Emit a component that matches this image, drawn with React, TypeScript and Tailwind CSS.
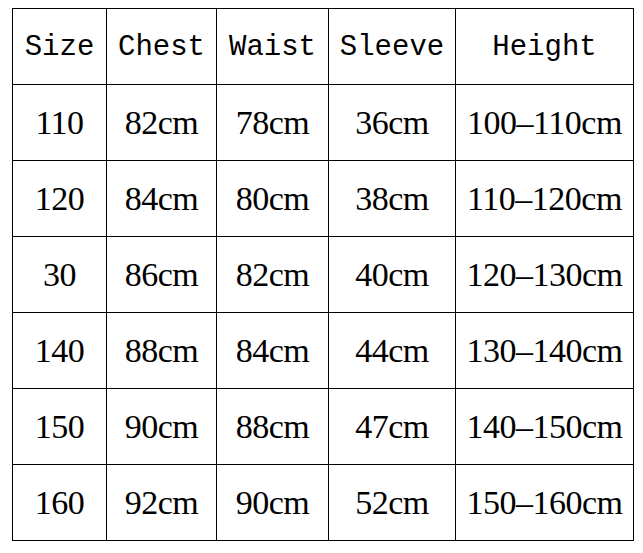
import React from 'react';

const header = ['Size', 'Chest', 'Waist', 'Sleeve', 'Height'];

const rows = [
  ['110', '82cm', '78cm', '36cm', '100–110cm'],
  ['120', '84cm', '80cm', '38cm', '110–120cm'],
  ['30', '86cm', '82cm', '40cm', '120–130cm'],
  ['140', '88cm', '84cm', '44cm', '130–140cm'],
  ['150', '90cm', '88cm', '47cm', '140–150cm'],
  ['160', '92cm', '90cm', '52cm', '150–160cm'],
];

export default function App() {
  return (
    <div className="w-[643px] h-[553px] bg-white pt-[8px] pl-[12px]">
      <div className="inline-grid grid-cols-[93px_109px_111px_126px_177px] auto-rows-[75px] gap-px p-px bg-black">
        {header.map(h => (
          <div
            key={h}
            className="bg-white flex items-center justify-center text-[29px] text-black pt-[2px]"
            style={{ fontFamily: '"Liberation Mono", "DejaVu Sans Mono", monospace' }}
          >
            {h}
          </div>
        ))}
        {rows.map(r =>
          r.map((c, i) => (
            <div
              key={r[0] + i}
              className="bg-white flex items-center justify-center text-[34px] text-black leading-none tracking-[-0.5px]"
              style={{ fontFamily: '"Liberation Serif", "Times New Roman", serif' }}
            >
              {c}
            </div>
          ))
        )}
      </div>
    </div>
  );
}
